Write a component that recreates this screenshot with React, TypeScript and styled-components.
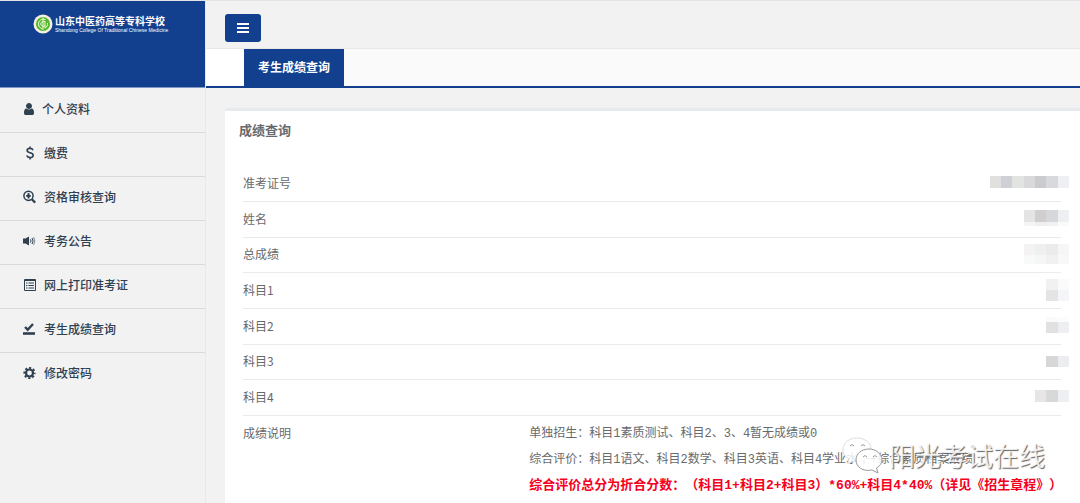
import React from 'react';
import styled, { createGlobalStyle } from 'styled-components';

const navy = '#12408f';
const sans = "'Noto Sans CJK SC', sans-serif";

const GlobalStyle = createGlobalStyle`
  * { box-sizing: border-box; }
  body {
    margin: 0;
    background: #f2f2f2;
    color: #676a6c;
    font: 12px/20px ${sans};
    text-spacing-trim: space-all;
    overflow: hidden;
  }
`;

const Shell = styled.div`
  display: flex;
  min-height: 100vh;
  border-top: 1px solid #e4e4e6;
`;

const Sidebar = styled.aside`
  flex: 0 0 206px;
  border-right: 1px solid #e9e9ea;
`;

const Brand = styled.header`
  height: 87px;
  padding: 13px 0 0 33px;
  display: flex;
  align-items: flex-start;
  gap: 2px;
  background: ${navy};
  border-bottom: 1px solid #7f98c4;
  color: #fff;
`;

const BrandName = styled.div`
  display: flex;
  flex-direction: column;
  font: 700 10px/13px ${sans};
  white-space: nowrap;

  small {
    font: 400 5px/6px 'Liberation Sans', sans-serif;
  }
`;

const Menu = styled.ul`
  margin: 0;
  padding: 1px 0 0;
  list-style: none;
`;

const MenuItem = styled.li`
  height: 44px;
  border-bottom: 1px solid #d9d9d6;

  &:last-child { border-bottom: 0; }
`;

const MenuLink = styled.a<{ $tight?: boolean }>`
  height: 40px;
  padding-left: 22px;
  display: flex;
  align-items: center;
  gap: ${(p) => (p.$tight ? 6 : 8)}px;
  color: #2f4050;
  font-weight: 500;
  text-decoration: none;

  svg { width: 14px; height: 14px; flex: none; }
`;

const Main = styled.main`
  flex: 1;
  min-width: 0;
  display: flex;
  flex-direction: column;
`;

const TopBar = styled.div`
  height: 48px;
  padding: 13px 19px 0;
  border-bottom: 1px solid #e7e7e7;
`;

const ToggleButton = styled.button`
  width: 36px;
  height: 28px;
  padding: 0;
  display: grid;
  place-items: center;
  border: 0;
  border-radius: 3px;
  background: ${navy};
  color: #fff;
`;

const TabBar = styled.nav`
  height: 39px;
  display: flex;
  background: #fafafa;
  border-bottom: 2px solid ${navy};

  &::before {
    content: '';
    width: 38px;
    background: #fff;
  }
`;

const Tab = styled.a`
  padding: 0 14px;
  background: ${navy};
  color: #fff;
  font-weight: 700;
  line-height: 36px;
  text-decoration: none;
`;

const Panel = styled.section`
  flex: 1;
  margin: 20px 0 0 19px;
  padding: 0 19px 0 18px;
  border-top: 3px solid #e7eaec;
  background: #fff;
`;

const PanelTitle = styled.h1`
  margin: 0 -4px;
  padding: 9px 0 26px;
  font-size: 13px;
  line-height: 20px;
  font-weight: 700;
`;

const ResultTable = styled.table`
  width: 100%;
  border-collapse: separate;
  border-spacing: 0;
  table-layout: fixed;
`;

const Row = styled.tr`
  height: 36px;

  &:nth-child(3n) { height: 35px; }

  th, td {
    padding: 0 0 2px;
    border-bottom: 1px solid #e9ebed;
  }

  &:last-child th, &:last-child td {
    padding-top: 5px;
    border-bottom: 0;
    vertical-align: top;
  }
`;

const Label = styled.th`
  width: 35%;
  font-weight: 400;
  line-height: 24px;
  text-align: left;
`;

const Value = styled.td`
  line-height: 0;
  text-align: right;
`;

const Mosaic = styled.svg`
  margin-right: -8px;
  vertical-align: middle;
`;

const Notes = styled.td`
  white-space: nowrap;
  font-family: 'Liberation Mono', ${sans};
  line-height: 26px;
`;

const Note = styled.p`
  margin: 0;
`;

const Formula = styled.strong`
  display: block;
  color: #f5001d;
  font-size: 13px;
`;

const Watermark = styled.div`
  position: absolute;
  right: 35px;
  top: 435px;
  display: flex;
  align-items: center;
  gap: 5px;
  color: rgba(255, 255, 255, 0.85);
  font: 400 26px/40px ${sans};
  text-shadow: 1px 1px 1px #666;
  white-space: nowrap;
`;

const icons: Record<string, React.ReactNode> = {
  user: (
    <svg viewBox="-256 0 1792 1792" fill="currentColor">
      <path d="M1280 1399q0 109-62.5 187t-150.5 78h-854q-88 0-150.5-78t-62.5-187q0-85 8.5-160.5t31.5-152 58.5-131 94-89 134.5-34.5q131 128 313 128t313-128q76 0 134.5 34.5t94 89 58.5 131 31.5 152 8.5 160.5zm-256-887q0 159-112.5 271.5t-271.5 112.5-271.5-112.5-112.5-271.5 112.5-271.5 271.5-112.5 271.5 112.5 112.5 271.5z" />
    </svg>
  ),
  dollar: (
    <svg viewBox="0 0 14 14" fill="none" stroke="currentColor" strokeWidth="1.6">
      <path d="M11 4.2C10.500 2.900 9.500 2.400 8 2.400C6.300 2.400 5.100 3.200 5.100 4.600C5.100 7.600 11.200 6 11.200 9.200C11.200 10.700 9.900 11.500 8.100 11.500C6.300 11.500 5.200 10.800 4.700 9.500M8 .5V2.500M8 11.500V13.500" />
    </svg>
  ),
  search: (
    <svg viewBox="0 0 14 14" fill="none" stroke="currentColor">
      <circle cx="6.500" cy="5.800" r="4.600" strokeWidth="1.500" />
      <path d="M9.800 9.200L13.200 12.600" strokeWidth="2.200" />
      <path d="M6.500 3V8.600M4.200 5.800H8.800" strokeWidth="1.700" />
      <circle cx="6.500" cy="5.800" r="1.600" fill="currentColor" stroke="none" />
    </svg>
  ),
  sound: (
    <svg viewBox="0 0 14 14" fill="none" stroke="currentColor">
      <path d="M1 4.500H3.500L7 2.500V11.500L3.500 9.500H1Z" fill="currentColor" stroke="none" />
      <path d="M8.300 5.300Q9.800 7 8.300 8.700M10 4Q12.200 7 10 10" />
      <path d="M11.600 3Q14 7 11.600 11" strokeOpacity=".6" />
    </svg>
  ),
  list: (
    <svg viewBox="0 0 14 14" fill="none" stroke="currentColor">
      <path d="M2.500 1.500H13.500V12.500H2.500ZM2.500 2.500H13.500" />
      <path d="M4 5H5.500M6.500 5H12M4 7.500H5.500M6.500 7.500H12M4 10H5.500M6.500 10H12" strokeWidth="1.200" />
    </svg>
  ),
  check: (
    <svg viewBox="0 0 14 14" fill="none" stroke="currentColor">
      <path d="M3 5L5.700 7.700L11 2" strokeWidth="2.400" />
      <path d="M1 11.500H13" strokeWidth="2.600" />
    </svg>
  ),
  gear: (
    <svg viewBox="0 0 14 14" fill="none" stroke="currentColor">
      <circle cx="7.500" cy="7" r="3.500" strokeWidth="2.200" />
      <circle cx="7.500" cy="7" r="5.200" strokeWidth="1.800" strokeDasharray="2.2 1.884" strokeDashoffset="1.1" />
    </svg>
  ),
};

const menu = [
  { icon: 'user', label: '个人资料', tight: true },
  { icon: 'dollar', label: '缴费' },
  { icon: 'search', label: '资格审核查询' },
  { icon: 'sound', label: '考务公告' },
  { icon: 'list', label: '网上打印准考证' },
  { icon: 'check', label: '考生成绩查询' },
  { icon: 'gear', label: '修改密码' },
];

/* Each masked value is a list of tile rows: top, height, then tile colours ending at the right edge. */
type Strip = [number, number, string[]];

const rows: { label: string; strips: Strip[] }[] = [
  { label: '准考证号', strips: [[4, 12, ['#e2e0df', '#ced0d5', '#e1e4e0', '#d9d9dc', '#cbcbce', '#d8d9dc', '#eef0f3']]] },
  { label: '姓名', strips: [[2, 12, ['#e4e4e5', '#d1cfce', '#d6d7da', '#eeeff3']], [14, 4, ['#f5f5f6', '#efefef', '#f1f1f3', '#fafafb']]] },
  { label: '总成绩', strips: [[1, 11, ['#f5f2f4', '#eeefef', '#ebebeb', '#f6f6f6']], [12, 9, ['#f8f9f9', '#f4f7f6', '#f1f1f1', '#f8f8f8']]] },
  { label: '科目1', strips: [[0, 11, ['#f1f1f1', '#fafafb']], [11, 11, ['#e4e4e5', '#f4f5f8']]] },
  { label: '科目2', strips: [[2, 5, ['#fafafa', '#fcfcfc']], [7, 11, ['#e1e1df', '#eeeff3']]] },
  { label: '科目3', strips: [[6, 11, ['#d7d7d8', '#ecedf0']]] },
  { label: '科目4', strips: [[4, 12, ['#e8e6e4', '#d6d9d8', '#eeeff3']]] },
];

const tileEdge = (fromRight: number) => 80 - Math.round((fromRight * 34) / 3);

function MaskedValue({ strips }: { strips: Strip[] }) {
  return (
    <Mosaic width="80" height="22" aria-label="已隐藏">
      {strips.map(([y, h, tiles]) =>
        tiles.map((fill, i) => {
          const left = tileEdge(tiles.length - i);
          const right = tileEdge(tiles.length - i - 1);
          return <rect key={`${y}-${i}`} x={left} y={y} width={right - left} height={h} fill={fill} />;
        }),
      )}
    </Mosaic>
  );
}

export default function App() {
  return (
    <>
      <GlobalStyle />
      <Shell>
        <Sidebar>
          <Brand>
            <svg width="20" height="20" viewBox="0 0 20 20" fill="none">
              <circle cx="10" cy="10" r="9.500" fill="#f4efe0" />
              <circle cx="10" cy="10" r="7" fill="#55b82c" />
              <path d="M12.500 5.500C8 4.500 5.500 7 5.500 10C5.500 13 7.500 14.500 9.500 14.500M10 3.500V16M12.500 7.500C9 7 7.800 8.500 7.800 10C7.800 12 10 12.500 12 12M12 8V14C14 13 14.800 11.500 14.500 9" stroke="#eefbdc" strokeWidth="1" />
            </svg>
            <BrandName>
              山东中医药高等专科学校
              <small>Shandong College Of Traditional Chinese Medicine</small>
            </BrandName>
          </Brand>
          <Menu>
            {menu.map((m) => (
              <MenuItem key={m.label}>
                <MenuLink href="#" $tight={m.tight}>
                  {icons[m.icon]}
                  {m.label}
                </MenuLink>
              </MenuItem>
            ))}
          </Menu>
        </Sidebar>
        <Main>
          <TopBar>
            <ToggleButton type="button" aria-label="菜单">
              <svg width="12" height="10" viewBox="0 0 12 10" fill="currentColor">
                <path d="M0 0H12V2H0ZM0 4H12V6H0ZM0 8H12V10H0Z" />
              </svg>
            </ToggleButton>
          </TopBar>
          <TabBar>
            <Tab href="#">考生成绩查询</Tab>
          </TabBar>
          <Panel>
            <PanelTitle>成绩查询</PanelTitle>
            <ResultTable>
              <tbody>
                {rows.map((r) => (
                  <Row key={r.label}>
                    <Label scope="row">{r.label}</Label>
                    <Value><MaskedValue strips={r.strips} /></Value>
                  </Row>
                ))}
                <Row>
                  <Label scope="row">成绩说明</Label>
                  <Notes>
                    <Note>单独招生：科目1素质测试、科目2、3、4暂无成绩或0</Note>
                    <Note>综合评价：科目1语文、科目2数学、科目3英语、科目4学业水平+综合素质档案成绩</Note>
                    <Formula>综合评价总分为折合分数：（科目1+科目2+科目3）*60%+科目4*40%（详见《招生章程》）</Formula>
                  </Notes>
                </Row>
              </tbody>
            </ResultTable>
          </Panel>
        </Main>
      </Shell>
      <Watermark>
        <svg width="43" height="38" viewBox="0 0 43 38" fill="rgba(255,255,255,.85)" stroke="#999" strokeWidth="1">
          <path d="M16 2C8 2 2 7 2 14C2 18 4 21 8 23L6.500 27.500L12 25C20 27 30 22 30 13C30 7 24 2 16 2Z" stroke="#ddd" />
          <path d="M28 13C20 13 15 18 15 24C15 31 22 36 31 34L37 37L35.500 32C39 30 41 27 41 24C41 18 35 13 28 13Z" />
          <path d="M9 10Q11 7 13 10M20 10Q22 7 24 10M22 21Q24 18 26 21M32 21Q34 18 36 21" fill="none" />
        </svg>
        阳光考试在线
      </Watermark>
    </>
  );
}
